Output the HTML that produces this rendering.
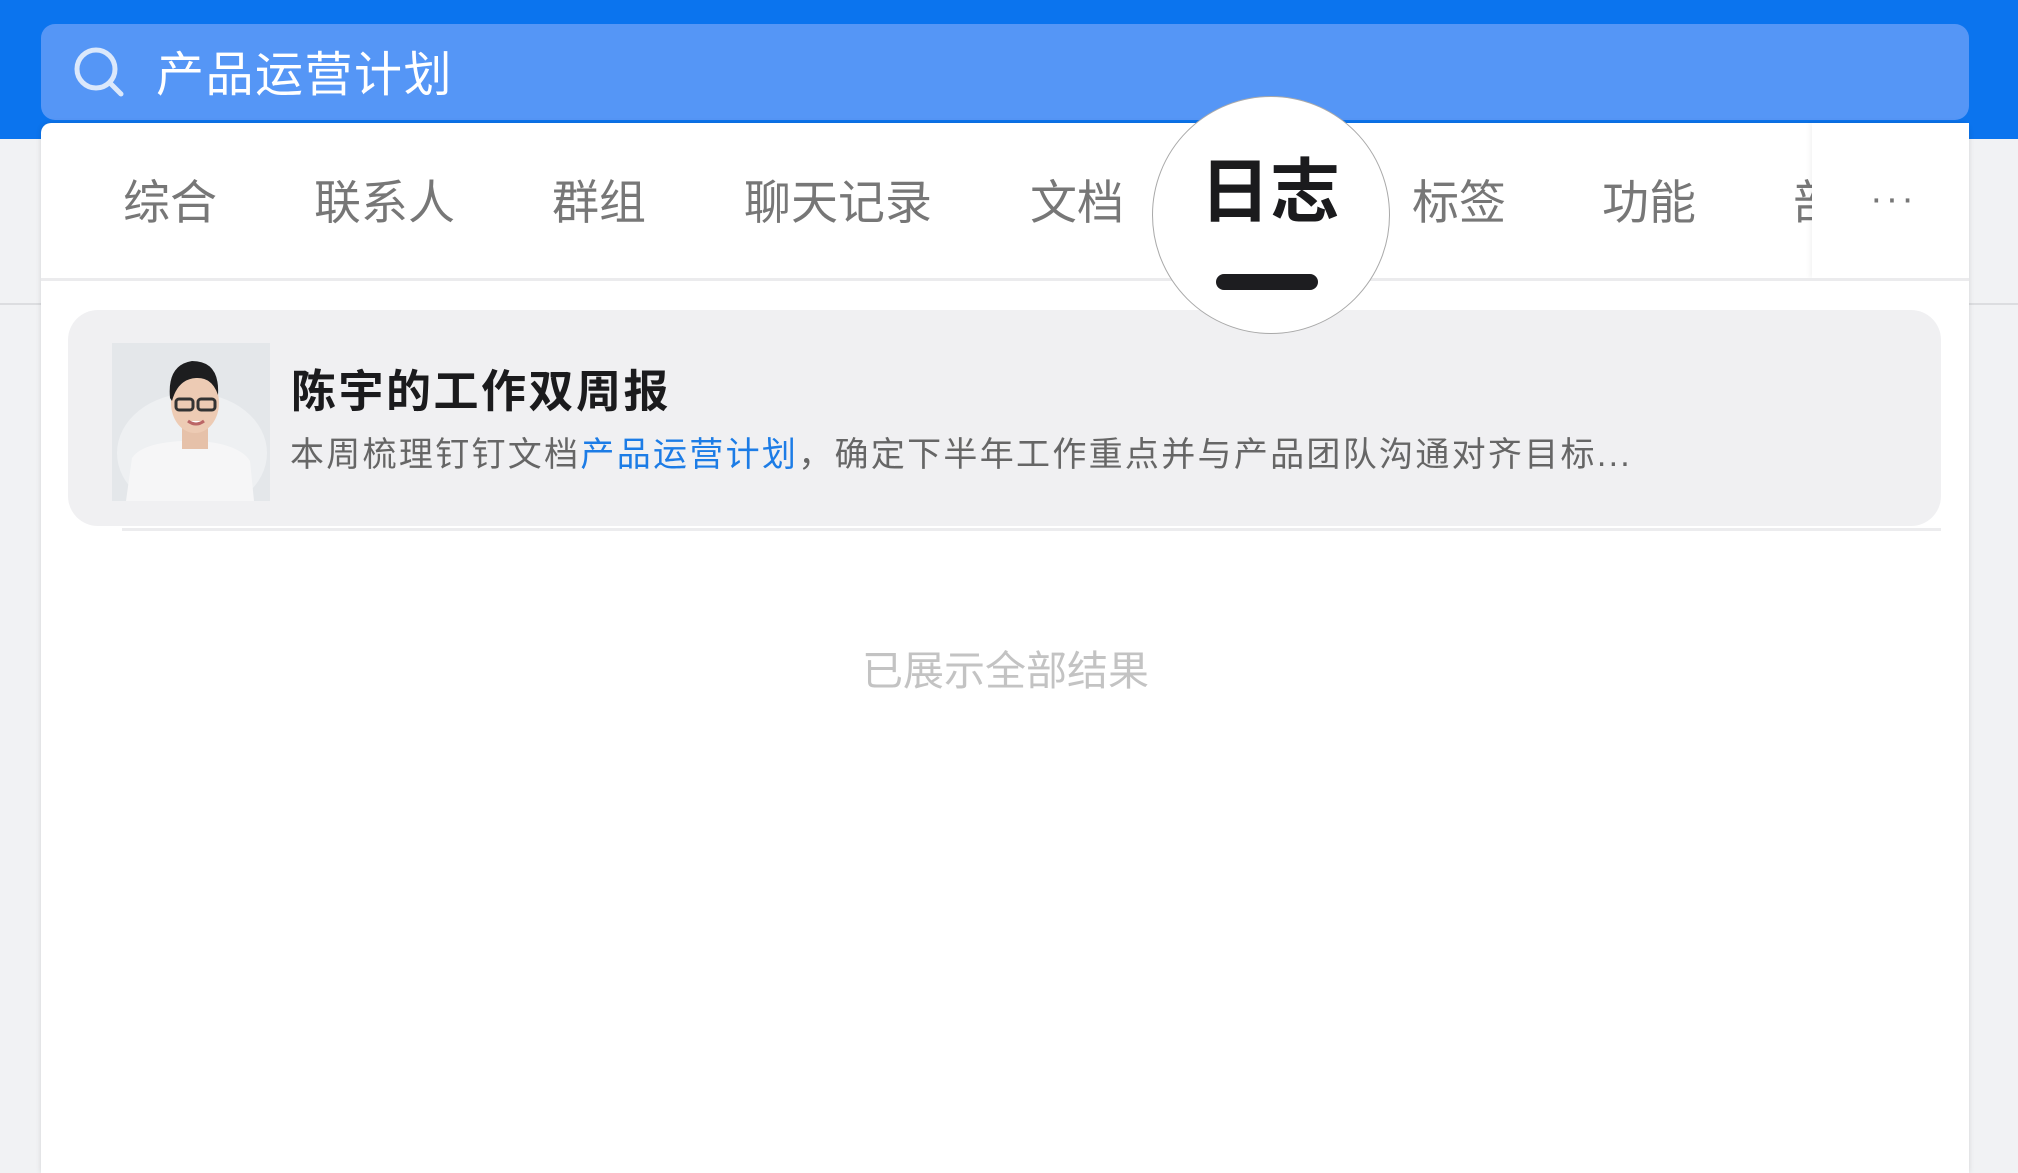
<!DOCTYPE html>
<html><head><meta charset="utf-8"><style>
*{margin:0;padding:0;box-sizing:border-box}
body{width:2018px;height:1162px;overflow:hidden;background:#f1f2f4;position:relative;font-family:"Liberation Sans","Noto Sans CJK SC",sans-serif}
.hdr{position:absolute;left:0;top:0;width:2018px;height:139px;background:#0b74ee}
.gl{position:absolute;left:0;top:303px;width:2018px;height:2px;background:#dcdde0}
.search{position:absolute;left:41px;top:24px;width:1928px;height:96px;background:#5596f6;border-radius:14px}
.search .t{position:absolute;left:115px;top:24px;font-size:48px;line-height:56px;color:#fff;letter-spacing:1.5px}
.panel{position:absolute;left:41px;top:123px;width:1928px;height:1050px;background:#fff;border-radius:10px 10px 0 0;box-shadow:0 0 6px rgba(0,0,0,.12)}
.tab{position:absolute;top:175px;font-size:47px;line-height:56px;color:#777}
.div{position:absolute;left:41px;top:278px;width:1928px;height:3px;background:#ebebed}
.fade{position:absolute;left:1812px;top:123px;width:157px;height:155px;background:#fff;box-shadow:-3px 0 4px rgba(0,0,0,.04)}
.card{position:absolute;left:68px;top:310px;width:1873px;height:216px;background:#f0f0f2;border-radius:30px}
.cl{position:absolute;left:122px;top:528px;width:1819px;height:3px;background:#ececee}
.circ{position:absolute;left:1152px;top:96px;width:238px;height:238px;border-radius:50%;background:#fff;border:1.5px solid #a9a9a9}
</style></head><body>
<div class="hdr"></div>
<div class="gl"></div>
<div class="search">
<svg style="position:absolute;left:30px;top:20px" width="58" height="58" viewBox="0 0 58 58"><circle cx="25" cy="25" r="19" fill="none" stroke="#dbe8fb" stroke-width="5"/><line x1="39" y1="39" x2="50" y2="50" stroke="#dbe8fb" stroke-width="5" stroke-linecap="round"/></svg>
<div class="t">产品运营计划</div></div>
<div class="panel"></div>
<div class="tab" style="left:123px">综合</div>
<div class="tab" style="left:314px">联系人</div>
<div class="tab" style="left:552px">群组</div>
<div class="tab" style="left:744px">聊天记录</div>
<div class="tab" style="left:1030px">文档</div>
<div class="tab" style="left:1412px">标签</div>
<div class="tab" style="left:1602px">功能</div>
<div class="tab" style="left:1793px">部</div>
<div class="fade"></div>
<div style="position:absolute;left:1870px;top:178px;font-size:38px;color:#777;letter-spacing:3px">···</div>
<div class="div"></div>
<div class="card"></div>
<div class="cl"></div>
<div class="circ"></div>
<div style="position:absolute;left:1200px;top:152px;font-size:70px;line-height:80px;font-weight:bold;color:#1b1b1d">日志</div>
<div style="position:absolute;left:1216px;top:274px;width:102px;height:16px;border-radius:8px;background:#1d1d20"></div>
<svg style="position:absolute;left:112px;top:343px" width="158" height="158" viewBox="0 0 158 158">
<rect width="158" height="158" fill="#e4e7ea"/>
<ellipse cx="80" cy="110" rx="75" ry="60" fill="#eef0f2"/>
<path d="M14 158 L20 115 Q30 100 70 98 L90 98 Q128 102 138 118 L142 158Z" fill="#f6f6f7"/>
<rect x="70" y="80" width="26" height="26" fill="#e6c1a9"/>
<ellipse cx="83" cy="60" rx="24" ry="30" fill="#edcbb4"/>
<path d="M58 55 Q55 22 80 18 Q108 18 106 52 Q100 34 84 35 Q66 36 60 58Z" fill="#1d1d1f"/>
<rect x="64" y="56" width="17" height="11" rx="3" fill="none" stroke="#333" stroke-width="3"/>
<rect x="86" y="56" width="17" height="11" rx="3" fill="none" stroke="#333" stroke-width="3"/>
<path d="M76 78 Q84 84 92 78" stroke="#b66" stroke-width="3" fill="#fff"/>
</svg>
<div style="position:absolute;left:291px;top:364px;font-size:45px;line-height:56px;font-weight:bold;color:#1b1b1d;letter-spacing:2.5px">陈宇的工作双周报</div>
<div style="position:absolute;left:290px;top:433px;font-size:34px;line-height:44px;color:#666;letter-spacing:2.3px;white-space:nowrap">本周梳理钉钉文档<span style="color:#1c7ce6">产品运营计划</span>，确定下半年工作重点并与产品团队沟通对齐目标...</div>
<div style="position:absolute;left:862px;top:648px;font-size:41px;line-height:46px;color:#c3c3c3">已展示全部结果</div>
</body></html>
